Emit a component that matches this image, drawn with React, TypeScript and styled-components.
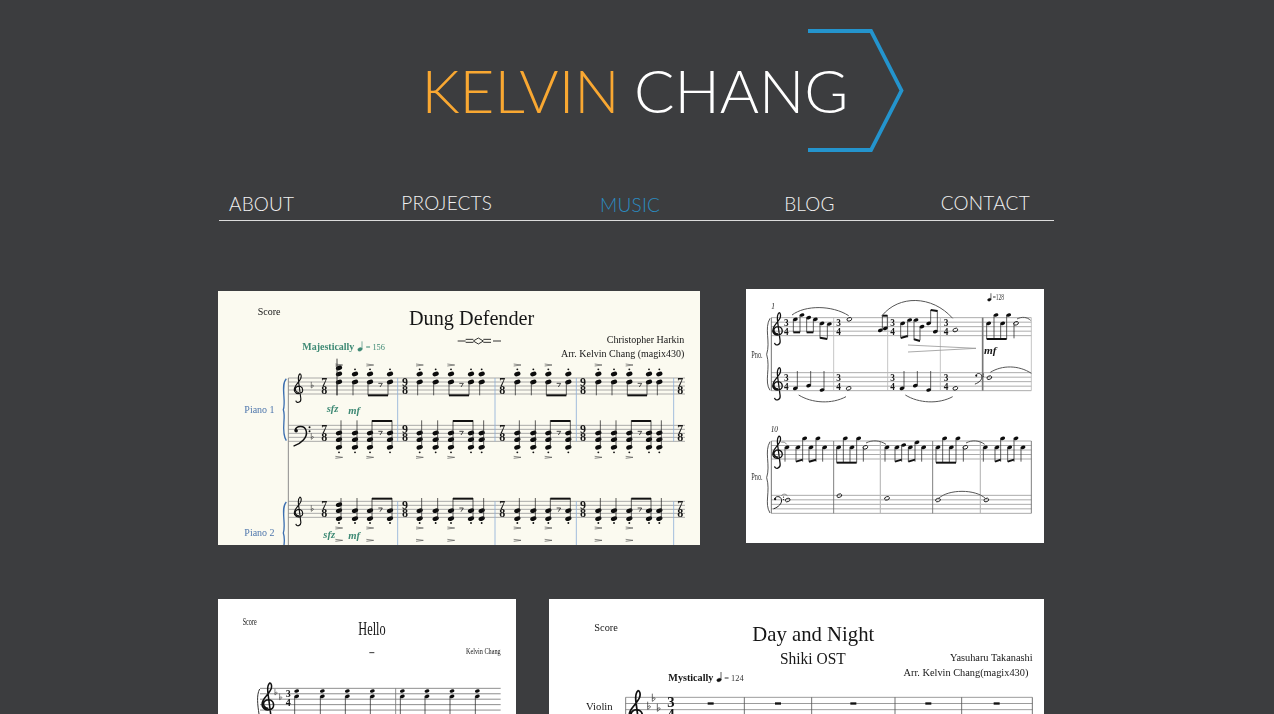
import { FC, ReactNode } from 'react';
import styled, { createGlobalStyle } from 'styled-components';

const GlobalStyle = createGlobalStyle`
  html, body {
    margin: 0;
    height: 100%;
    overflow: hidden;
    background: #3c3d3f;
  }
`;

const Page = styled.div`
  height: 100vh;
  overflow: hidden;
  background: #3c3d3f;
  font-family: Lato, 'Liberation Sans', sans-serif;
  font-weight: 300;
`;

const Header = styled.header`
  display: flex;
  justify-content: center;
  height: 188px;
  padding: 0 4px 0 0;
  box-sizing: border-box;
`;

const Wordmark = styled.h1`
  position: relative;
  margin: 54px 0 0;
  height: 72px;
  font-size: 60px;
  line-height: 72px;
  font-weight: 300;
  word-spacing: -2px;
  white-space: nowrap;
  color: #ffffff;
`;

const Accent = styled.span`
  color: #f9a832;
`;

const Chevron = styled.svg`
  position: absolute;
  left: 386px;
  top: -25px;
  width: 97px;
  height: 125px;
`;

const Nav = styled.nav`
  display: flex;
  align-items: flex-end;
  width: 835px;
  height: 33px;
  margin-left: 219px;
  padding: 0 0 0 10px;
  box-sizing: border-box;
  border-bottom: 1px solid #dcdcdc;
`;

const NavItem = styled.a<{ $active?: boolean; $left?: number; $lift: number }>`
  margin-left: ${(p) => p.$left ?? 0}px;
  padding-bottom: ${(p) => p.$lift}px;
  font-size: 19px;
  line-height: 24px;
  letter-spacing: 0.2px;
  color: ${(p) => (p.$active ? '#2b8cc2' : '#f2f2f2')};
`;

const Gallery = styled.main`
  display: flex;
  flex-direction: column;
  gap: 54px;
  width: 826px;
  margin: 68px 0 0 218px;
`;

const Row = styled.div`
  display: flex;
  justify-content: space-between;
  align-items: flex-start;
`;

const Sheet = styled.figure<{ $width: number; $paper?: string; $drop?: number }>`
  flex: none;
  width: ${(p) => p.$width}px;
  height: 254px;
  margin: ${(p) => p.$drop ?? 0}px 0 0;
  background: ${(p) => p.$paper ?? '#ffffff'};
  overflow: hidden;
`;

const ScoreSvg = styled.svg`
  display: block;
  width: 100%;
  height: 100%;
  filter: blur(0.4px);
`;

const Label = styled.text<{
  $size: number;
  $fill?: string;
  $bold?: boolean;
  $italic?: boolean;
  $end?: boolean;
  $mid?: boolean;
}>`
  font-family: 'Liberation Serif', 'Times New Roman', serif;
  font-size: ${(p) => p.$size}px;
  font-weight: ${(p) => (p.$bold ? 700 : 400)};
  font-style: ${(p) => (p.$italic ? 'italic' : 'normal')};
  fill: ${(p) => p.$fill ?? '#161616'};
  text-anchor: ${(p) => (p.$end ? 'end' : p.$mid ? 'middle' : 'start')};
`;

// --- notation helpers, coordinates are 3x the sheet pixels ---

const Staff: FC<{ x1: number; x2: number; y: number; gap: number; color?: string; width?: number }> = ({
  x1,
  x2,
  y,
  gap,
  color = '#9a9a9a',
  width = 2.5,
}) => (
  <g stroke={color} strokeWidth={width}>
    {[0, 1, 2, 3, 4].map((i) => (
      <line key={i} x1={x1} x2={x2} y1={y + i * gap} y2={y + i * gap} />
    ))}
  </g>
);

const Bar: FC<{ x: number; y1: number; y2: number; color?: string; width?: number }> = ({
  x,
  y1,
  y2,
  color = '#666',
  width = 2.5,
}) => <line x1={x} x2={x} y1={y1} y2={y2} stroke={color} strokeWidth={width} />;

const Head: FC<{ x: number; y: number; open?: boolean; size?: number }> = ({ x, y, open, size = 1 }) => (
  <ellipse
    cx={x}
    cy={y}
    rx={7.5 * size}
    ry={5 * size}
    transform={`rotate(-20 ${x} ${y})`}
    fill={open ? 'none' : '#0c0c0c'}
    stroke="#0c0c0c"
    strokeWidth={open ? 2.5 : 0}
  />
);

const Note: FC<{ x: number; y: number; to?: number; open?: boolean; size?: number }> = ({ x, y, to, open, size }) => (
  <g>
    <Head x={x} y={y} open={open} size={size} />
    {to !== undefined && (
      <line
        x1={to > y ? x - 6 : x + 6}
        x2={to > y ? x - 6 : x + 6}
        y1={y}
        y2={to}
        stroke="#222"
        strokeWidth={2.2}
      />
    )}
  </g>
);

const Beam: FC<{ x1: number; x2: number; y: number; y2?: number; width?: number }> = ({ x1, x2, y, y2, width = 6 }) => (
  <line x1={x1} x2={x2} y1={y} y2={y2 ?? y} stroke="#111" strokeWidth={width} />
);

const Curve: FC<{ d: string; color?: string; width?: number }> = ({ d, color = '#555', width = 2.5 }) => (
  <path d={d} fill="none" stroke={color} strokeWidth={width} />
);

const Treble: FC<{ x: number; gLine: number; gap: number }> = ({ x, gLine, gap }) => {
  const s = gap / 3.2;
  return (
    <path
      transform={`translate(${x - 4.5 * s} ${gLine - 13 * s}) scale(${s})`}
      d="M5 15C2.2 15 1.2 12 3 10.6C5 9 8 10.2 8 13C8 16.2 3 17 1.5 14C0 10 5 7.4 6.5 3.6C7.2 1.6 6.5 0 5.8 0C4.5 1 4.3 4 4.8 7L6.5 20C6.8 23 3 24 2.5 21.5"
      fill="none"
      stroke="#111"
      strokeWidth={0.9}
    />
  );
};

const BassClef: FC<{ x: number; fLine: number; gap: number }> = ({ x, fLine, gap }) => (
  <g transform={`translate(${x} ${fLine}) scale(${gap})`} fill="#111">
    <path d="M0.2 0.3C0.4-0.9 2.6-1.2 3 0.5C3.3 2 1.8 3.5-0.2 4.2" fill="none" stroke="#111" strokeWidth={0.38} />
    <circle cx={0.45} cy={0.35} r={0.45} />
    <circle cx={3.8} cy={-0.5} r={0.25} />
    <circle cx={3.8} cy={0.5} r={0.25} />
  </g>
);

const Flat: FC<{ x: number; y: number; size?: number }> = ({ x, y, size = 1 }) => (
  <path
    transform={`translate(${x} ${y}) scale(${size})`}
    d="M-4-18V5C1 2 5-1 4-4C3-7-1-6-4-2"
    fill="none"
    stroke="#222"
    strokeWidth={2}
  />
);

const TimeSig: FC<{ x: number; top: number; bottom: number; n: string; d: string; size: number }> = ({
  x,
  top,
  bottom,
  n,
  d,
  size,
}) => (
  <g>
    <Label x={x} y={top} $size={size} $bold $mid>
      {n}
    </Label>
    <Label x={x} y={bottom} $size={size} $bold $mid>
      {d}
    </Label>
  </g>
);

const Tempo: FC<{ x: number; y: number; color: string; size?: number }> = ({ x, y, color, size = 1 }) => (
  <g fill={color} stroke={color}>
    <ellipse cx={x} cy={y} rx={7 * size} ry={5 * size} transform={`rotate(-20 ${x} ${y})`} />
    <line x1={x + 6 * size} x2={x + 6 * size} y1={y} y2={y - 24 * size} strokeWidth={2} />
  </g>
);

// --- Dung Defender ---

const ddMeasures = [
  { xs: [372, 420, 465, 525] },
  { xs: [614, 662, 708, 768, 800] },
  { xs: [907, 955, 1000, 1060] },
  { xs: [1150, 1197, 1243, 1302, 1333] },
];

const ddBarsBlue = [548, 840, 1084, 1376];
const ddMeters: [number, string][] = [
  [328, '7'],
  [570, '9'],
  [862, '7'],
  [1104, '9'],
  [1396, '7'],
];

const Accents: FC<{ x: number; y: number }> = ({ x, y }) => (
  <Curve d={`M${x - 11} ${y - 3}L${x + 11} ${y}L${x - 11} ${y + 3}`} color="#444" width={1.8} />
);

const DD_HEAD = 1.3;

const DungDefender: FC = () => (
  <ScoreSvg viewBox="9 9 1446 762">
    <Label x={128} y={80} $size={30}>
      Score
    </Label>
    <Label x={582} y={110} $size={60} textLength={376} lengthAdjust="spacingAndGlyphs">
      Dung Defender
    </Label>
    <Curve d="M728 159H752M752 154H775M752 163H775M775 159L790 150L805 159L790 168ZM805 154H828M805 163H828M834 159H858" color="#222" width={2.8} />
    <Label x={1408} y={165} $size={30} $end>
      Christopher Harkin
    </Label>
    <Label x={1408} y={207} $size={30} $end>
      Arr. Kelvin Chang (magix430)
    </Label>
    <Label x={262} y={187} $size={29} $bold $fill="#3f8a75" textLength={156} lengthAdjust="spacingAndGlyphs">
      Majestically
    </Label>
    <Tempo x={435} y={184} color="#3f8a75" />
    <Label x={452} y={186} $size={25} $fill="#3f8a75">
      = 156
    </Label>
    <Label x={88} y={375} $size={30} $fill="#4f77ad">
      Piano 1
    </Label>
    <Label x={88} y={743} $size={30} $fill="#4f77ad">
      Piano 2
    </Label>
    <Label x={335} y={373} $size={32} $fill="#3f8a75" $bold $italic>
      sfz
    </Label>
    <Label x={400} y={378} $size={32} $fill="#3f8a75" $bold $italic>
      mf
    </Label>
    <Label x={325} y={750} $size={32} $fill="#3f8a75" $bold $italic>
      sfz
    </Label>
    <Label x={400} y={752} $size={32} $fill="#3f8a75" $bold $italic>
      mf
    </Label>

    <Staff x1={220} x2={1410} y={270} gap={12} />
    <Staff x1={220} x2={1410} y={412} gap={12} />
    <Staff x1={220} x2={1410} y={640} gap={12} />
    <Bar x={220} y1={270} y2={771} color="#8c8c8c" width={3} />
    {ddBarsBlue.map((x) => (
      <g key={x}>
        <Bar x={x} y1={270} y2={460} color="#8fb0d8" />
        <Bar x={x} y1={640} y2={771} color="#8fb0d8" />
      </g>
    ))}
    <Curve d="M214 272C196 290 214 340 205 365C214 390 196 430 214 458" color="#3c6fb0" width={4} />
    <Curve d="M214 642C196 660 214 710 205 735C210 750 208 760 207 771" color="#3c6fb0" width={4} />

    <Treble x={250} gLine={306} gap={12} />
    <Treble x={250} gLine={676} gap={12} />
    <BassClef x={238} fLine={424} gap={12} />
    <Flat x={292} y={296} size={0.8} />
    <Flat x={292} y={450} size={0.8} />
    <Flat x={292} y={666} size={0.8} />
    {ddMeters.map(([x, n]) => (
      <g key={x}>
        <TimeSig x={x} top={294} bottom={318} n={n} d="8" size={36} />
        <TimeSig x={x} top={436} bottom={460} n={n} d="8" size={36} />
        <TimeSig x={x} top={664} bottom={688} n={n} d="8" size={36} />
      </g>
    ))}

    {ddMeasures.map(({ xs }) => (
      <g key={xs[0]}>
        {xs.map((x, i) => {
          const accent = i === 0 || i === 2;
          return (
            <g key={x}>
              <Note x={x} y={258} size={DD_HEAD} />
              <Note x={x} y={282} to={322} size={DD_HEAD} />
              <circle cx={x} cy={244} r={2.8} fill="#111" />
              {accent && <Accents x={x} y={231} />}

              <Note x={x} y={435} size={DD_HEAD} />
              <Note x={x} y={455} size={DD_HEAD} />
              <Note x={x} y={478} to={397} size={DD_HEAD} />
              <circle cx={x} cy={493} r={2.8} fill="#111" />
              {accent && <Accents x={x} y={508} />}

              <Note x={x} y={668} size={DD_HEAD} />
              <Note x={x} y={692} to={630} size={DD_HEAD} />
              <circle cx={x} cy={705} r={2.8} fill="#111" />
              {accent && <Accents x={x} y={720} />}
              {accent && <Accents x={x} y={757} />}
            </g>
          );
        })}
        <Beam x1={xs[2] - 6} x2={xs[3] - 6} y={322} />
        <Beam x1={xs[2] + 6} x2={xs[3] + 6} y={399} />
        <Beam x1={xs[2] + 6} x2={xs[3] + 6} y={632} />
        <Curve d={`M${xs[2] + 25} 286H${xs[2] + 37}L${xs[2] + 30} 297`} color="#222" />
        <Curve d={`M${xs[2] + 25} 430H${xs[2] + 37}L${xs[2] + 30} 441`} color="#222" />
        <Curve d={`M${xs[2] + 25} 660H${xs[2] + 37}L${xs[2] + 30} 671`} color="#222" />
      </g>
    ))}
    <Note x={372} y={240} size={DD_HEAD} />
    <Note x={372} y={650} size={DD_HEAD} />
    <Bar x={372 - 6} y1={212} y2={322} color="#222" />
  </ScoreSvg>
);

// --- piano page ---

const pianoTop: [number, number, number][] = [
  [160, 103, 142],
  [180, 90, 142],
  [200, 98, 142],
  [220, 103, 142],
  [240, 115, 160],
  [262, 117, 160],
  [482, 115, 157],
  [503, 105, 157],
  [522, 105, 165],
  [540, 125, 165],
  [560, 115, 75],
  [580, 140, 75],
  [740, 115, 162],
  [762, 90, 162],
  [782, 115, 162],
  [800, 90, 162],
];

const pianoLeft: [number, number][] = [
  [160, 310],
  [200, 302],
  [240, 315],
  [480, 310],
  [520, 302],
  [560, 315],
];

const pianoSecond: [number, number, number][] = [
  [168, 487, 530],
  [188, 460, 530],
  [207, 487, 530],
  [228, 460, 530],
  [290, 487, 533],
  [310, 460, 533],
  [330, 487, 533],
  [350, 460, 533],
  [465, 487, 530],
  [485, 480, 530],
  [505, 487, 530],
  [525, 472, 530],
  [588, 487, 533],
  [608, 460, 533],
  [628, 487, 533],
  [648, 460, 533],
  [765, 487, 530],
  [782, 460, 530],
  [803, 487, 530],
  [822, 460, 530],
];

const pianoSoloStems = [135, 248, 435, 545, 730, 843];
const pianoThirds = [133, 290, 452, 612];

const PianoPage: FC = () => (
  <ScoreSvg viewBox="12 12 894 762">
    <Label x={88} y={72} $size={22} $italic>
      1
    </Label>
    <Tempo x={742} y={44} color="#111" size={0.8} />
    <Label x={752} y={46} $size={22} $fill="#333" textLength={34} lengthAdjust="spacingAndGlyphs">
      =128
    </Label>
    <Label x={28} y={218} $size={28} $fill="#333" textLength={34} lengthAdjust="spacingAndGlyphs">
      Pno.
    </Label>
    <Label x={28} y={586} $size={28} $fill="#333" textLength={34} lengthAdjust="spacingAndGlyphs">
      Pno.
    </Label>

    <Staff x1={88} x2={868} y={98} gap={13.5} />
    <Staff x1={88} x2={868} y={263} gap={13.5} />
    <Staff x1={88} x2={868} y={468} gap={13.5} />
    <Staff x1={88} x2={868} y={631} gap={13.5} />

    <Bar x={88} y1={98} y2={317} color="#555" />
    <Bar x={88} y1={468} y2={685} color="#555" />
    <Curve d="M84 100C66 130 86 170 74 208C86 250 66 290 84 316" color="#333" />
    <Curve d="M84 470C66 500 86 540 74 578C86 620 66 655 84 684" color="#333" />

    {[275, 437, 595, 868].map((x) => (
      <Bar key={x} x={x} y1={98} y2={317} color="#bbb" />
    ))}
    <Bar x={722} y1={98} y2={317} color="#777" width={5} />
    {[275, 572, 868].map((x) => (
      <Bar key={x} x={x} y1={468} y2={685} color="#666" />
    ))}
    {[415, 715].map((x) => (
      <Bar key={x} x={x} y1={468} y2={685} color="#bbb" width={3.5} />
    ))}

    <Treble x={106} gLine={138} gap={13.5} />
    <Treble x={106} gLine={303} gap={13.5} />
    <Treble x={106} gLine={508} gap={13.5} />
    <BassClef x={96} fLine={640} gap={7.5} />
    <BassClef x={700} fLine={270} gap={6.5} />
    {pianoThirds.map((x) => (
      <g key={x}>
        <TimeSig x={x} top={122} bottom={150} n="3" d="4" size={28} />
        <TimeSig x={x} top={287} bottom={315} n="3" d="4" size={28} />
      </g>
    ))}

    {pianoTop.map(([x, y, to]) => (
      <Note key={x} x={x} y={y} to={to} />
    ))}
    <Beam x1={154} x2={174} y={142} />
    <Beam x1={194} x2={214} y={142} />
    <Beam x1={234} x2={256} y={158} y2={162} />
    <Beam x1={476} x2={497} y={159} y2={153} />
    <Beam x1={516} x2={534} y={163} y2={168} />
    <Beam x1={566} x2={586} y={75} y2={78} />
    <Beam x1={734} x2={794} y={162} />
    <Note x={322} y={103} open />
    <Note x={640} y={135} open />
    <Note x={822} y={115} open to={160} />
    <Note x={415} y={136} to={90} />
    <Note x={430} y={130} to={90} />
    <Beam x1={421} x2={436} y={92} />
    <Curve d="M150 90C190 60 270 60 320 92" width={3} />
    <Curve d="M420 92C470 30 570 30 632 100" width={3} />
    <Curve d="M825 102C840 94 855 96 866 106" width={3} />
    <Curve d="M498 180L702 190M498 201L702 190" color="#999" />
    <Label x={726} y={208} $size={34} $bold $italic>
      mf
    </Label>

    {pianoLeft.map(([x, y]) => (
      <Note key={x} x={x} y={y} to={258} />
    ))}
    <Note x={320} y={310} open />
    <Note x={640} y={310} open />
    <Note x={742} y={278} open />
    <Curve d="M745 262C780 240 830 240 868 265" width={3} />
    <Curve d="M170 330C210 355 270 358 312 335" width={3} />
    <Curve d="M490 330C530 355 590 358 632 335" width={3} />

    <Label x={86} y={440} $size={22} $italic>
      10
    </Label>
    {pianoSecond.map(([x, y, to]) => (
      <Note key={x} x={x} y={y} to={to} />
    ))}
    {pianoSoloStems.map((x) => (
      <Note key={x} x={x} y={487} to={530} />
    ))}
    <Beam x1={284} x2={344} y={533} />
    <Beam x1={582} x2={642} y={533} />
    <Beam x1={162} x2={182} y={530} y2={524} />
    <Beam x1={201} x2={222} y={530} y2={524} />
    <Beam x1={459} x2={479} y={530} y2={524} />
    <Beam x1={499} x2={519} y={530} y2={524} />
    <Beam x1={759} x2={776} y={530} y2={524} />
    <Beam x1={797} x2={816} y={530} y2={524} />
    <Note x={370} y={487} open to={530} />
    <Note x={670} y={487} open to={530} />
    <Curve d="M372 474C390 464 415 466 432 478" width={3} />
    <Curve d="M672 474C690 464 712 466 728 478" width={3} />
    <Curve d="M118 472C125 470 130 472 134 478" width={2} />
    <Note x={137} y={645} open />
    <Note x={292} y={632} open />
    <Note x={435} y={640} open />
    <Note x={588} y={645} open />
    <Note x={733} y={645} open />
    <Curve d="M590 640C620 612 700 612 730 640" width={3} />
    <Curve d="M118 632C124 626 130 626 136 632" width={2} />
  </ScoreSvg>
);

// --- Hello ---

const helloChords = [245, 322, 397, 472, 562, 636, 711, 787];

const HelloPage: FC = () => (
  <ScoreSvg viewBox="9 12 894 762">
    <Label x={83} y={90} $size={28} textLength={42} lengthAdjust="spacingAndGlyphs">
      Score
    </Label>
    <Label x={430} y={120} $size={56} textLength={82} lengthAdjust="spacingAndGlyphs">
      Hello
    </Label>
    <Label x={753} y={178} $size={26} textLength={104} lengthAdjust="spacingAndGlyphs">
      Kelvin Chang
    </Label>
    <Curve d="M463 173H478" color="#333" width={3} />
    <Staff x1={135} x2={857} y={280} gap={16.3} color="#777" />
    <Curve d="M134 282C124 300 128 330 132 357" color="#333" width={3} />
    <Treble x={158} gLine={330} gap={16.3} />
    <Flat x={183} y={296} size={0.8} />
    <Flat x={197} y={310} size={0.8} />
    <TimeSig x={220} top={307} bottom={332} n="3" d="4" size={30} />
    <Bar x={542} y1={280} y2={357} color="#777" />
    {helloChords.map((x) => (
      <g key={x}>
        <Note x={x} y={288} />
        <Note x={x} y={304} to={357} />
      </g>
    ))}
  </ScoreSvg>
);

// --- Day and Night ---

const dayBars = [598, 800, 1050, 1250, 1462];
const dayRests = [497, 699, 925, 1150, 1355];

const RestBar = styled.rect`
  fill: #111;
`;

const DayAndNight: FC = () => (
  <ScoreSvg viewBox="12 12 1485 762">
    <Label x={148} y={107} $size={31}>
      Score
    </Label>
    <Label x={622} y={138} $size={62} textLength={366} lengthAdjust="spacingAndGlyphs">
      Day and Night
    </Label>
    <Label x={705} y={208} $size={50} textLength={197} lengthAdjust="spacingAndGlyphs">
      Shiki OST
    </Label>
    <Label x={1463} y={197} $size={31} $end>
      Yasuharu Takanashi
    </Label>
    <Label x={1450} y={242} $size={31} $end>
      Arr. Kelvin Chang(magix430)
    </Label>
    <Label x={370} y={258} $size={29} $bold textLength={135} lengthAdjust="spacingAndGlyphs">
      Mystically
    </Label>
    <Tempo x={522} y={255} color="#111" />
    <Label x={538} y={258} $size={25} $fill="#333">
      = 124
    </Label>
    <Label x={123} y={345} $size={31} textLength={80} lengthAdjust="spacingAndGlyphs">
      Violin
    </Label>
    <Staff x1={242} x2={1462} y={307} gap={18.5} color="#888" />
    <Bar x={242} y1={307} y2={381} color="#666" />
    {dayBars.map((x) => (
      <Bar key={x} x={x} y1={307} y2={381} color="#555" />
    ))}
    <Treble x={272} gLine={362} gap={18.5} />
    <Flat x={312} y={338} />
    <Flat x={326} y={314} />
    <Flat x={341} y={344} />
    <TimeSig x={378} top={337} bottom={372} n="3" d="4" size={44} />
    {dayRests.map((x) => (
      <RestBar key={x} x={x - 9} y={322} width={18} height={7} />
    ))}
  </ScoreSvg>
);

const Score: FC<{ width: number; paper?: string; drop?: number; children: ReactNode }> = ({
  width,
  paper,
  drop,
  children,
}) => (
  <Sheet $width={width} $paper={paper} $drop={drop}>
    {children}
  </Sheet>
);

export default function App() {
  return (
    <Page>
      <GlobalStyle />
      <Header>
        <Wordmark>
          <Accent>KELVIN</Accent> CHANG
          <Chevron viewBox="808 29 97 125">
            <path d="M808 31H871L901.5 90.5L871 150H808" fill="none" stroke="#2494cd" strokeWidth={3.8} />
          </Chevron>
        </Wordmark>
      </Header>
      <Nav>
        <NavItem $lift={4}>ABOUT</NavItem>
        <NavItem $left={107} $lift={5}>
          PROJECTS
        </NavItem>
        <NavItem $left={108} $active $lift={3}>
          MUSIC
        </NavItem>
        <NavItem $left={124} $lift={4}>
          BLOG
        </NavItem>
        <NavItem $left={106} $lift={5}>
          CONTACT
        </NavItem>
      </Nav>
      <Gallery>
        <Row>
          <Score width={482} paper="#fbfaf0" drop={2}>
            <DungDefender />
          </Score>
          <Score width={298}>
            <PianoPage />
          </Score>
        </Row>
        <Row>
          <Score width={298}>
            <HelloPage />
          </Score>
          <Score width={495}>
            <DayAndNight />
          </Score>
        </Row>
      </Gallery>
    </Page>
  );
}
